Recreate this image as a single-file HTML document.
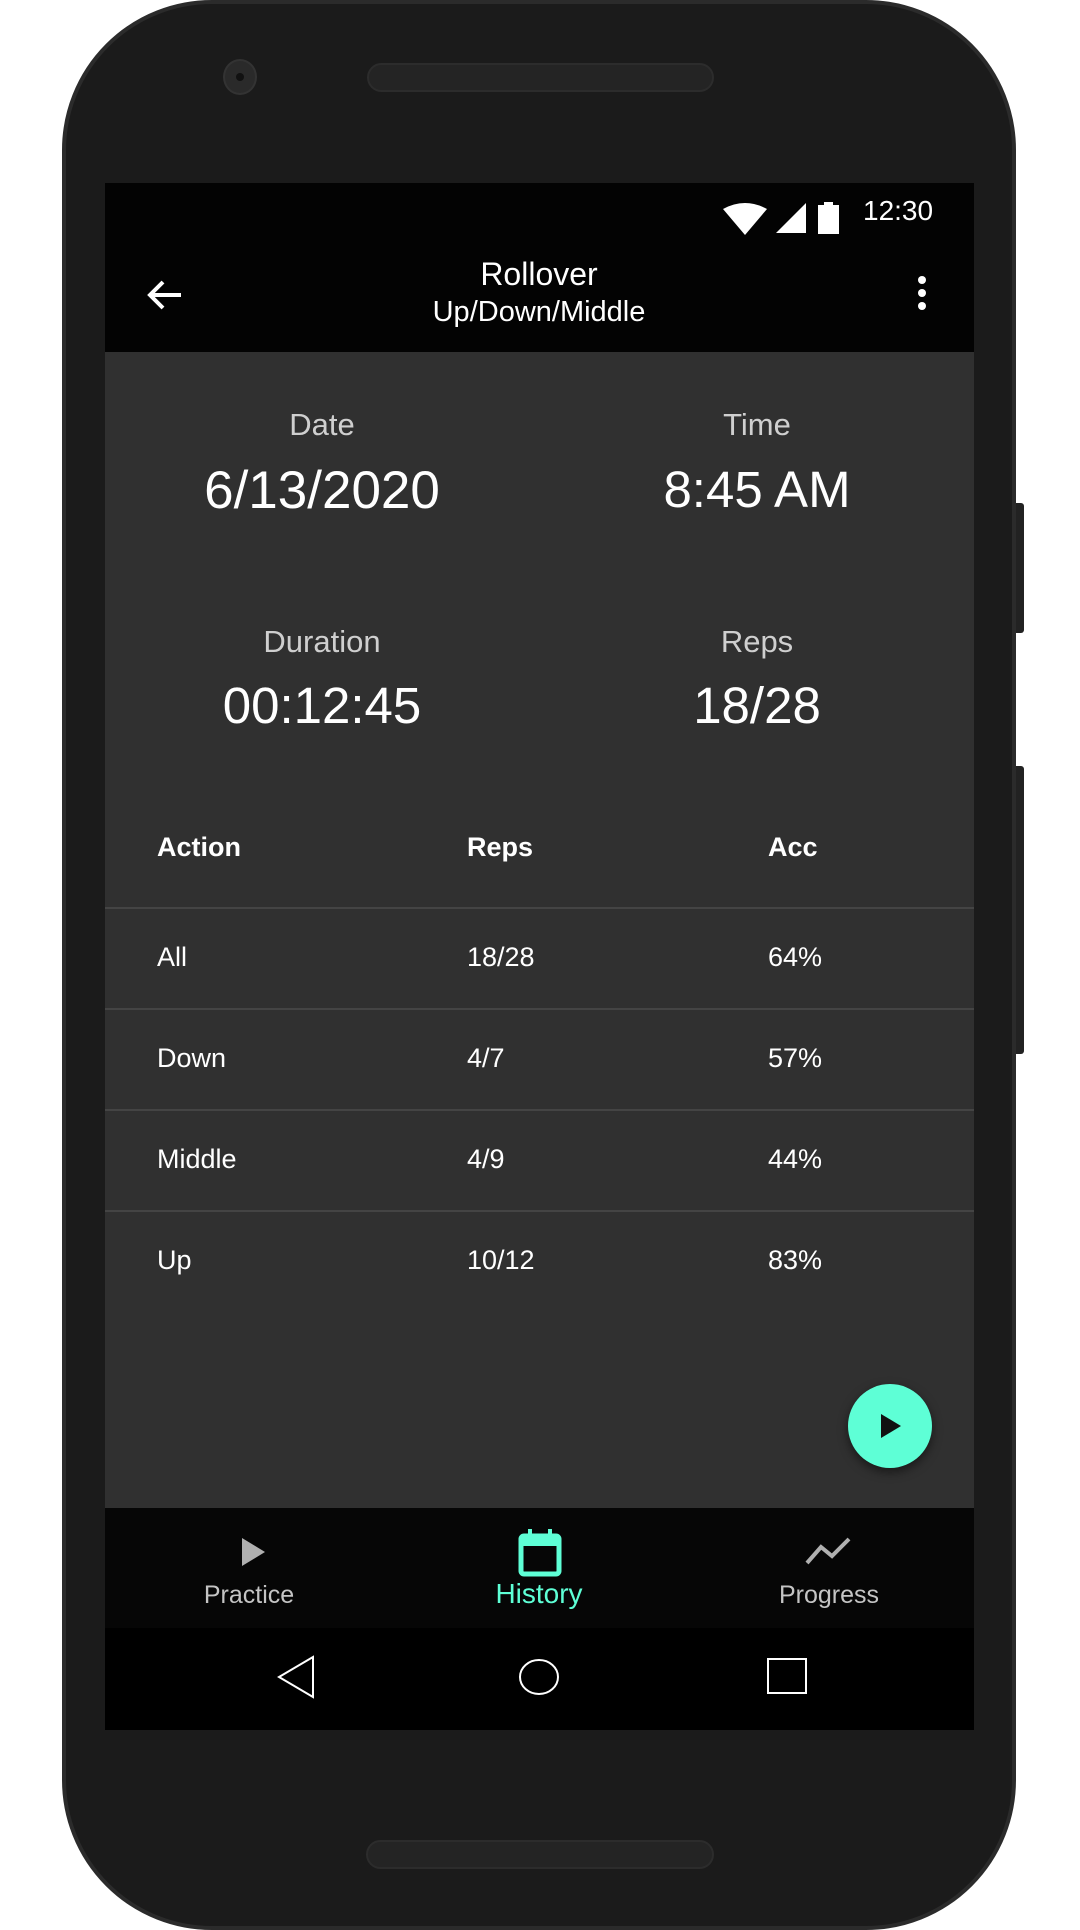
<!DOCTYPE html>
<html><head><meta charset="utf-8"><style>
*{margin:0;padding:0;box-sizing:border-box}
body{width:1080px;height:1920px;background:#fff;position:relative;overflow:hidden;font-family:"Liberation Sans",sans-serif}
.abs{position:absolute}
.phone{left:62px;top:0;width:954px;height:1930px;background:#1b1b1b;border-radius:150px;border:4px solid #2b2b2b}
.screen{left:105px;top:183px;width:869px;height:1547px;background:#303030;overflow:hidden}
.t{position:absolute;white-space:nowrap;color:#fff}
.c{transform:translateX(-50%)}
.lab{font-size:31px;color:#cfcfcf}
.val{font-size:51px}
.hd{font-size:27px;font-weight:bold}
.cell{font-size:27px}
.div{position:absolute;left:0;width:869px;height:2px;background:#444}
</style></head><body>
<div class="abs" style="left:1012px;top:503px;width:12px;height:130px;background:#222;border-radius:3px"></div>
<div class="abs" style="left:1012px;top:766px;width:12px;height:288px;background:#222;border-radius:3px"></div>
<div class="abs phone"></div>
<div class="abs" style="left:223px;top:59px;width:34px;height:36px;border-radius:50%;background:#2a2a2a;border:2px solid #333"></div>
<div class="abs" style="left:236px;top:73px;width:8px;height:8px;border-radius:50%;background:#111"></div>
<div class="abs" style="left:367px;top:63px;width:347px;height:29px;border-radius:15px;background:#242424;border:2px solid #2c2c2c"></div>
<div class="abs" style="left:366px;top:1840px;width:348px;height:29px;border-radius:15px;background:#242424;border:2px solid #2c2c2c"></div>
<div class="abs screen">
  <div class="abs" style="left:0;top:0;width:869px;height:169px;background:#030303"></div>
  <svg class="abs" style="left:618px;top:18px" width="150" height="40" viewBox="0 0 150 40">
    <path d="M0 8 Q22 -4 44 8 L22 34 Z" fill="#fff"/>
    <path d="M53 32 L83 32 L83 2 Z" fill="#fff"/>
    <rect x="95" y="4" width="21" height="29" fill="#fff"/><rect x="101" y="1" width="9" height="4" fill="#fff"/>
  </svg>
  <div class="t" style="left:758px;top:12px;font-size:28px">12:30</div>
  <svg class="abs" style="left:40px;top:92px" width="40" height="40" viewBox="0 0 40 40"><path d="M36 20H6M18 7L5 20L18 33" stroke="#fff" stroke-width="4" fill="none"/></svg>
  <div class="t c" style="left:434px;top:73px;font-size:32px">Rollover</div>
  <div class="t c" style="left:434px;top:113px;font-size:29px">Up/Down/Middle</div>
  <div class="abs" style="left:813px;top:93px;width:8px;height:8px;border-radius:50%;background:#fff;box-shadow:0 13px 0 #fff,0 26px 0 #fff"></div>
  <div class="t c lab" style="left:217px;top:224px">Date</div>
  <div class="t c val" style="left:217px;top:277px;font-size:53px">6/13/2020</div>
  <div class="t c lab" style="left:652px;top:224px">Time</div>
  <div class="t c val" style="left:652px;top:277px">8:45 AM</div>
  <div class="t c lab" style="left:217px;top:441px">Duration</div>
  <div class="t c val" style="left:217px;top:493px">00:12:45</div>
  <div class="t c lab" style="left:652px;top:441px">Reps</div>
  <div class="t c val" style="left:652px;top:493px">18/28</div>
  <div class="t hd" style="left:52px;top:649px">Action</div>
  <div class="t hd" style="left:362px;top:649px">Reps</div>
  <div class="t hd" style="left:663px;top:649px">Acc</div>
  <div class="div" style="top:724px"></div>
  <div class="t cell" style="left:52px;top:759px">All</div><div class="t cell" style="left:362px;top:759px">18/28</div><div class="t cell" style="left:663px;top:759px">64%</div>
  <div class="div" style="top:825px"></div>
  <div class="t cell" style="left:52px;top:860px">Down</div><div class="t cell" style="left:362px;top:860px">4/7</div><div class="t cell" style="left:663px;top:860px">57%</div>
  <div class="div" style="top:926px"></div>
  <div class="t cell" style="left:52px;top:961px">Middle</div><div class="t cell" style="left:362px;top:961px">4/9</div><div class="t cell" style="left:663px;top:961px">44%</div>
  <div class="div" style="top:1027px"></div>
  <div class="t cell" style="left:52px;top:1062px">Up</div><div class="t cell" style="left:362px;top:1062px">10/12</div><div class="t cell" style="left:663px;top:1062px">83%</div>
  <div class="abs" style="left:743px;top:1201px;width:84px;height:84px;border-radius:50%;background:#5effd6;box-shadow:0 4px 10px rgba(0,0,0,.5)"></div>
  <svg class="abs" style="left:771px;top:1229px" width="28" height="28" viewBox="0 0 28 28"><path d="M5 2L25 14L5 26Z" fill="#111"/></svg>
  <div class="abs" style="left:0;top:1325px;width:869px;height:120px;background:#060606"></div>
  <svg class="abs" style="left:134px;top:1353px" width="30" height="32" viewBox="0 0 30 32"><path d="M3 2L26 16L3 30Z" fill="#b0b0b0"/></svg>
  <div class="t c" style="left:144px;top:1398px;font-size:25px;color:#c4c4c4">Practice</div>
  <svg class="abs" style="left:412px;top:1345px" width="46" height="50" viewBox="0 0 46 50"><rect x="4" y="8" width="38" height="38" rx="3" fill="none" stroke="#5effd6" stroke-width="5"/><rect x="4" y="8" width="38" height="10" fill="#5effd6"/><rect x="11" y="1" width="4" height="9" fill="#5effd6"/><rect x="31" y="1" width="4" height="9" fill="#5effd6"/></svg>
  <div class="t c" style="left:434px;top:1395px;font-size:28px;color:#5effd6">History</div>
  <svg class="abs" style="left:700px;top:1353px" width="46" height="30" viewBox="0 0 46 30"><path d="M2 27L16 11L27 20L44 3" fill="none" stroke="#b0b0b0" stroke-width="4"/></svg>
  <div class="t c" style="left:724px;top:1398px;font-size:25px;color:#c4c4c4">Progress</div>
  <div class="abs" style="left:0;top:1445px;width:869px;height:102px;background:#000"></div>
  <svg class="abs" style="left:170px;top:1470px" width="560" height="48" viewBox="0 0 560 48">
    <path d="M38 4L38 44L4 24Z" fill="none" stroke="#fff" stroke-width="2"/>
    <ellipse cx="264" cy="24" rx="19" ry="17" fill="none" stroke="#fff" stroke-width="2"/>
    <rect x="493" y="6" width="38" height="34" fill="none" stroke="#fff" stroke-width="2"/>
  </svg>
</div>
</body></html>
